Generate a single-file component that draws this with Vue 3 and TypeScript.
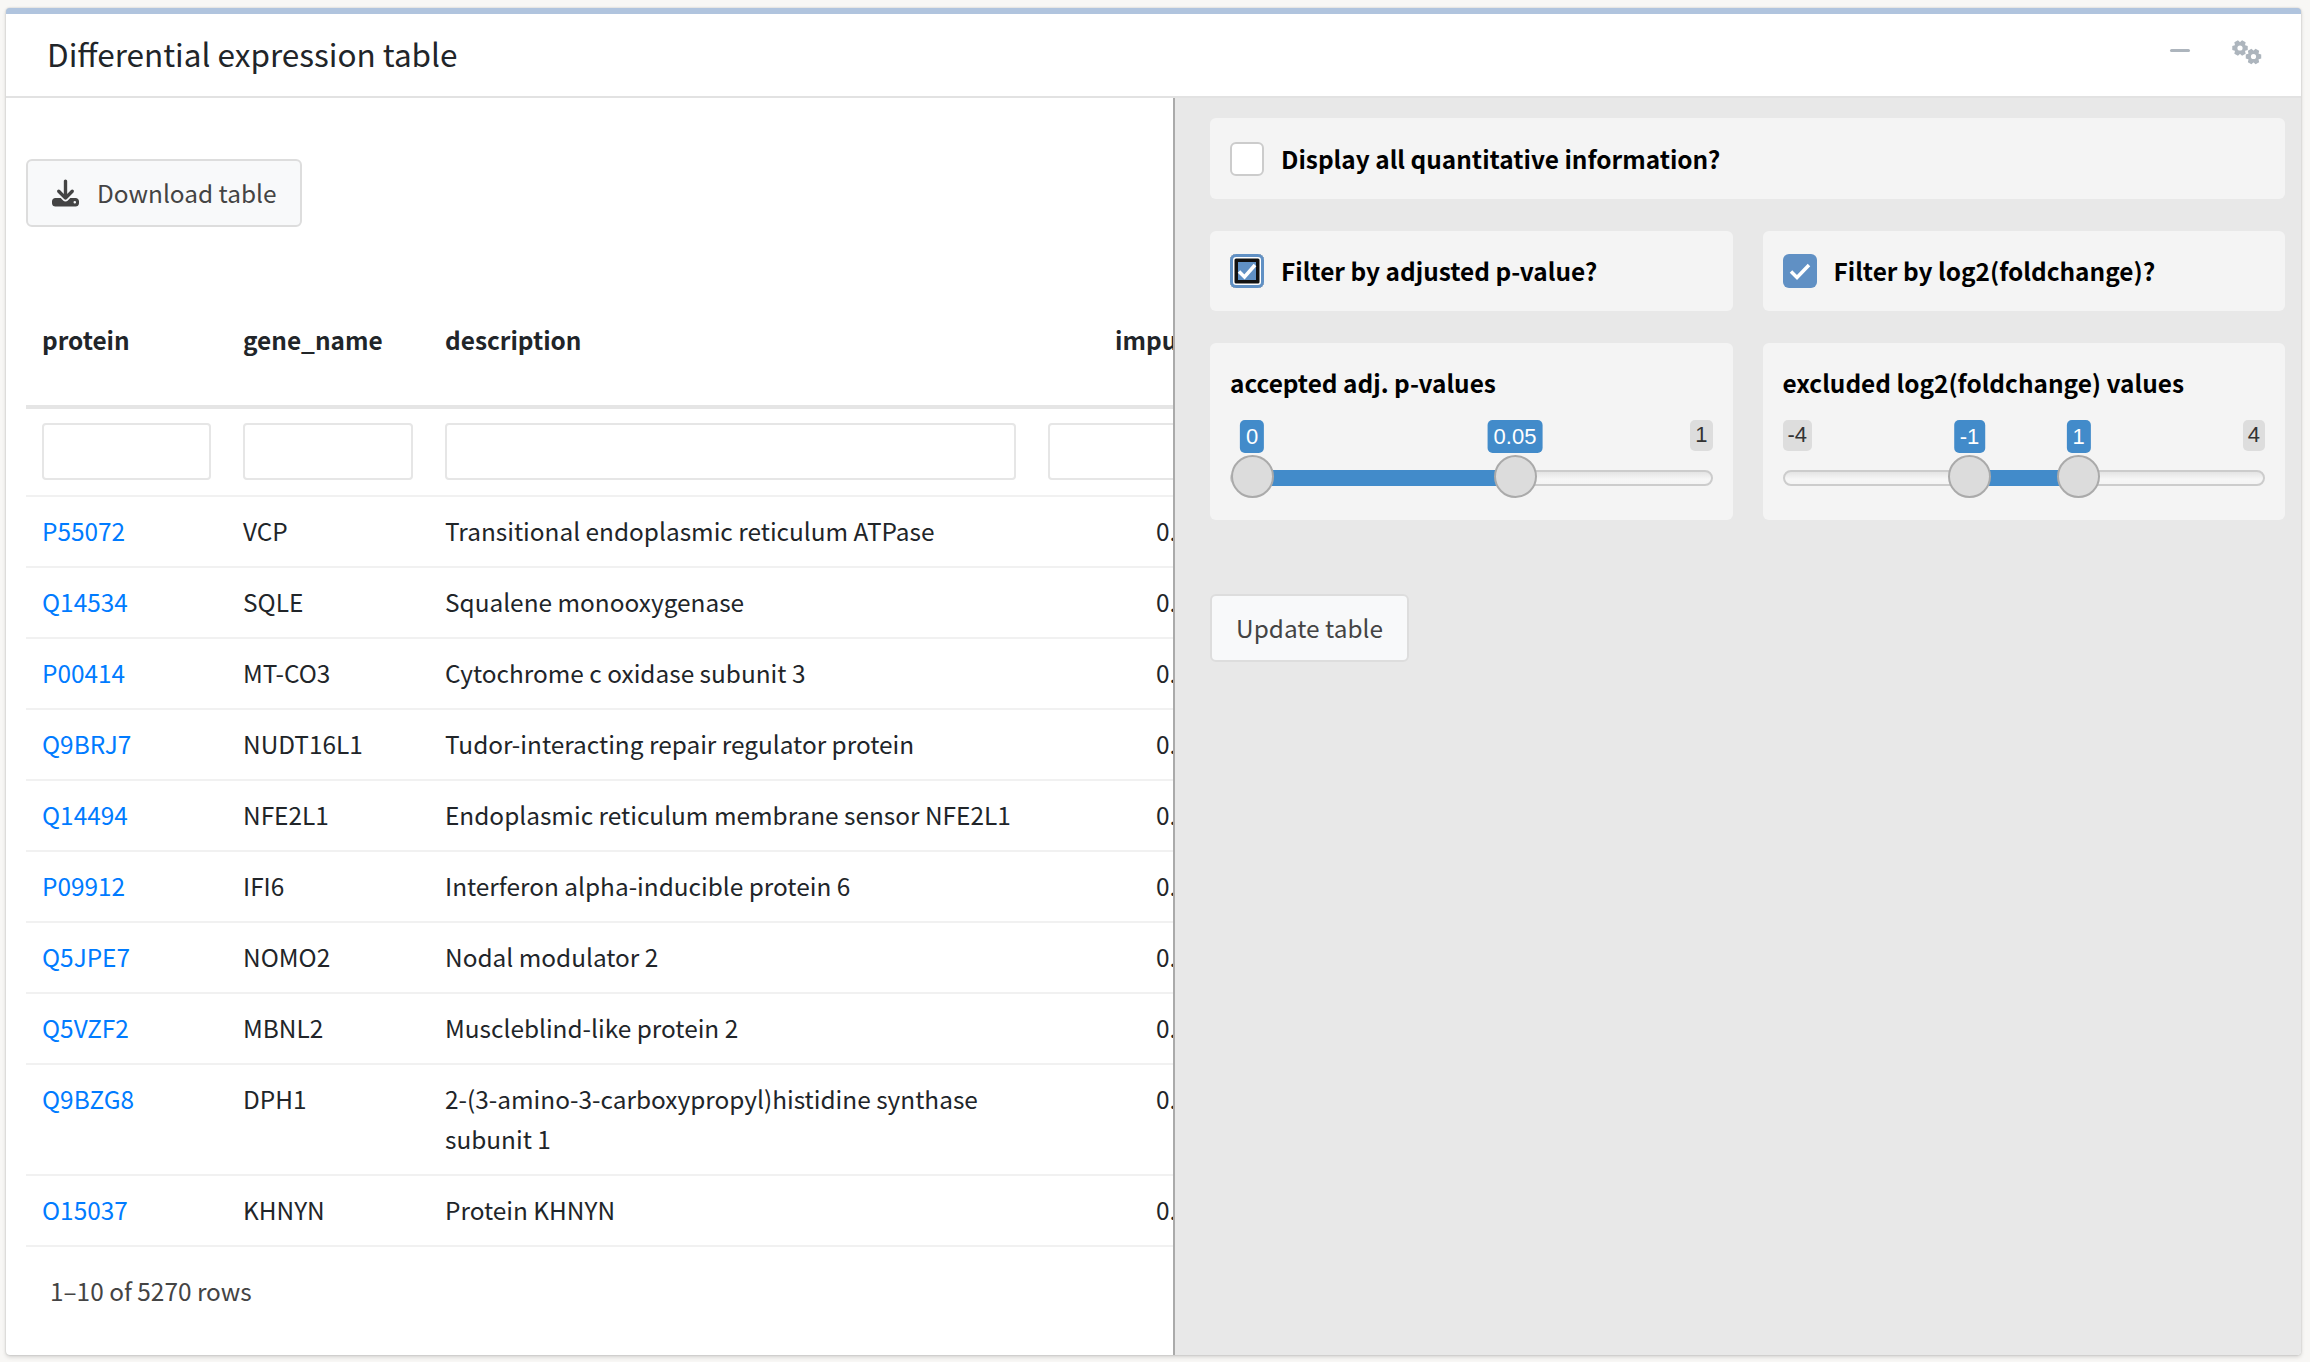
<script setup lang="ts">
interface Row { id: string; gene: string; desc: string }
const rows: Row[] = [
  { id: 'P55072', gene: 'VCP', desc: 'Transitional endoplasmic reticulum ATPase' },
  { id: 'Q14534', gene: 'SQLE', desc: 'Squalene monooxygenase' },
  { id: 'P00414', gene: 'MT-CO3', desc: 'Cytochrome c oxidase subunit 3' },
  { id: 'Q9BRJ7', gene: 'NUDT16L1', desc: 'Tudor-interacting repair regulator protein' },
  { id: 'Q14494', gene: 'NFE2L1', desc: 'Endoplasmic reticulum membrane sensor NFE2L1' },
  { id: 'P09912', gene: 'IFI6', desc: 'Interferon alpha-inducible protein 6' },
  { id: 'Q5JPE7', gene: 'NOMO2', desc: 'Nodal modulator 2' },
  { id: 'Q5VZF2', gene: 'MBNL2', desc: 'Muscleblind-like protein 2' },
  { id: 'Q9BZG8', gene: 'DPH1', desc: '2-(3-amino-3-carboxypropyl)histidine synthase subunit 1' },
  { id: 'O15037', gene: 'KHNYN', desc: 'Protein KHNYN' },
]

interface Slider {
  label: string
  min: string
  max: string
  from: string
  to: string
  fromPx: number
  toPx: number
}
const sliders: Slider[] = [
  { label: 'accepted adj. p-values', min: '', max: '1', from: '0', to: '0.05', fromPx: 22, toPx: 285 },
  { label: 'excluded log2(foldchange) values', min: '-4', max: '4', from: '-1', to: '1', fromPx: 187, toPx: 296 },
]

function gear(cx: number, cy: number, r: number, hole: number): string {
  const pts: string[] = []
  const teeth = 6
  const inner = r * 0.74
  for (let i = 0; i < teeth; i++) {
    const a = (i / teeth) * Math.PI * 2
    const step = Math.PI / teeth
    const seq: [number, number][] = [
      [a - step * 0.95, inner],
      [a - step * 0.5, r],
      [a + step * 0.5, r],
      [a + step * 0.95, inner],
    ]
    for (const [t, rad] of seq) {
      pts.push(`${(cx + rad * Math.cos(t)).toFixed(2)} ${(cy + rad * Math.sin(t)).toFixed(2)}`)
    }
  }
  const ring = `M${cx - hole} ${cy}a${hole} ${hole} 0 1 0 ${hole * 2} 0a${hole} ${hole} 0 1 0 ${-hole * 2} 0z`
  return `M${pts.join('L')}z${ring}`
}
const gearsPath = gear(9, 9, 8, 2.6) + gear(22.5, 17.5, 8, 2.6)
</script>

<template>
  <div class="page">
    <section class="card">
      <header class="card-head">
        <h3 class="title">Differential expression table</h3>
        <div class="tools">
          <span class="minus"></span>
          <svg class="gears" viewBox="0 0 31 26" width="31" height="26" aria-hidden="true">
            <path :d="gearsPath" fill="#adb5bd" fill-rule="evenodd" />
          </svg>
        </div>
      </header>
      <div class="card-body">
        <div class="left">
          <button class="btn btn-dl" type="button">
            <svg viewBox="0 0 512 512" width="27" height="28" aria-hidden="true">
              <path fill="#444" d="M288 32c0-17.700-14.300-32-32-32s-32 14.300-32 32V274.700l-73.400-73.400c-12.500-12.500-32.800-12.500-45.300 0s-12.500 32.800 0 45.300l128 128c12.500 12.500 32.800 12.500 45.300 0l128-128c12.500-12.500 12.500-32.800 0-45.300s-32.800-12.500-45.300 0L288 274.700V32zM64 352c-35.300 0-64 28.700-64 64v32c0 35.300 28.700 64 64 64H448c35.300 0 64-28.700 64-64V416c0-35.300-28.700-64-64-64H346.500l-45.300 45.300c-25 25-65.500 25-90.500 0L165.500 352H64zm368 56a24 24 0 1 1 0 48 24 24 0 1 1 0-48z" />
            </svg>
            <span class="btn-text">Download table</span>
          </button>
          <div class="table-wrap">
            <table class="dt">
              <colgroup>
                <col class="c1" /><col class="c2" /><col class="c3" /><col class="c4" />
              </colgroup>
              <thead>
                <tr class="heads">
                  <th>protein</th><th>gene_name</th><th>description</th><th class="imp">impu</th>
                </tr>
                <tr class="filters">
                  <td><div class="inp"></div></td>
                  <td><div class="inp"></div></td>
                  <td><div class="inp"></div></td>
                  <td><div class="inp"></div></td>
                </tr>
              </thead>
              <tbody>
                <tr v-for="r in rows" :key="r.id">
                  <td><a class="link" href="#">{{ r.id }}</a></td>
                  <td>{{ r.gene }}</td>
                  <td>{{ r.desc }}</td>
                  <td class="num">0.</td>
                </tr>
              </tbody>
            </table>
          </div>
          <div class="foot">1–10 of 5270 rows</div>
        </div>
        <div class="split"></div>
        <div class="right">
          <div class="panel check-panel wide">
            <span class="box"></span>
            <span class="lbl">Display all quantitative information?</span>
          </div>
          <div class="panel check-panel">
            <span class="box on focus">
              <svg viewBox="0 0 34 34" width="34" height="34" aria-hidden="true"><polyline points="9,17.500 14.500,23 25,11" fill="none" stroke="#fff" stroke-width="3.500" /></svg>
            </span>
            <span class="lbl">Filter by adjusted p-value?</span>
          </div>
          <div class="panel check-panel">
            <span class="box on">
              <svg viewBox="0 0 34 34" width="34" height="34" aria-hidden="true"><polyline points="8,17.500 14,23.500 26,11" fill="none" stroke="#fff" stroke-width="3.500" /></svg>
            </span>
            <span class="lbl">Filter by log2(foldchange)?</span>
          </div>
          <div v-for="s in sliders" :key="s.label" class="panel slider-panel">
            <div class="lbl">{{ s.label }}</div>
            <div class="slider">
              <span v-if="s.min" class="tag grey tag-min">{{ s.min }}</span>
              <span class="tag grey tag-max">{{ s.max }}</span>
              <span class="track"></span>
              <span class="fill" :style="{ left: s.fromPx + 'px', width: s.toPx - s.fromPx + 'px' }"></span>
              <span class="tag blue" :style="{ left: s.fromPx + 'px' }">{{ s.from }}</span>
              <span class="tag blue" :style="{ left: s.toPx + 'px' }">{{ s.to }}</span>
              <span class="handle" :style="{ left: s.fromPx + 'px' }"></span>
              <span class="handle" :style="{ left: s.toPx + 'px' }"></span>
            </div>
          </div>
          <div class="wide btn-row">
            <button class="btn btn-up" type="button">Update table</button>
          </div>
        </div>
      </div>
    </section>
  </div>
</template>

<style>
body { margin: 0; background: #f8f7f5; }
</style>

<style scoped>
.page {
  box-sizing: border-box;
  width: 2310px;
  height: 1362px;
  padding: 8px 9px 7px 6px;
  font-family: "Noto Sans CJK SC", "Source Sans Pro", "Noto Sans", sans-serif;
  font-size: 24.4px;
  line-height: 40px;
  color: #212529;
}
.card {
  box-sizing: border-box;
  height: 100%;
  display: flex;
  flex-direction: column;
  background: #fff;
  border-top: 6px solid #b0c4de;
  border-radius: 4px;
  box-shadow: 0 0 2px rgba(0, 0, 0, .2), 0 2px 4px rgba(0, 0, 0, .15);
  overflow: hidden;
}
.card-head {
  box-sizing: border-box;
  height: 84px;
  flex: none;
  display: flex;
  align-items: center;
  justify-content: space-between;
  padding: 0 39px 2px 41px;
  border-bottom: 2px solid #e2e2e2;
}
.title { margin: 0 0 2px; font-weight: 400; font-size: 31.500px; line-height: 44px; }
.tools { display: flex; align-items: center; gap: 41px; margin-top: -5px; }
.minus { width: 20px; height: 3px; background: #adb5bd; border-radius: 2px; margin-top: -3px; }
.gears { display: block; }
.card-body { flex: 1; display: flex; min-height: 0; }
.left { width: 1167px; flex: none; padding: 61px 0 0 20px; box-sizing: border-box; overflow: hidden; }
.split { width: 2px; flex: none; background: #aaa; }
.right {
  flex: 1;
  min-width: 0;
  background: #e8e8e8;
  box-sizing: border-box;
  padding: 20px 16px 0 35px;
  display: grid;
  grid-template-columns: 1fr 1fr;
  grid-template-rows: 81px 80px 177px auto;
  column-gap: 30px;
  row-gap: 32px;
  align-content: start;
}
.wide { grid-column: 1 / -1; }
.btn {
  box-sizing: border-box;
  font: inherit;
  color: #444;
  background: #f8f9fa;
  border: 2px solid #ddd;
  border-radius: 6px;
  padding: 0;
  display: inline-flex;
  align-items: center;
}
.btn-dl { width: 276px; height: 68px; padding-left: 24px; gap: 18px; }
.btn-text { margin-top: -1px; }
.btn-up { width: 199px; height: 68px; justify-content: center; padding-bottom: 1px; }
.btn-row { padding-top: 42px; }
.table-wrap { margin-top: 60px; }
.dt { border-collapse: separate; border-spacing: 0; table-layout: fixed; width: 1306px; }
.c1 { width: 201px; } .c2 { width: 202px; } .c3 { width: 603px; } .c4 { width: 300px; }
th, td { padding: 13.500px 16px 15.500px 16px; text-align: left; vertical-align: top; box-sizing: border-box; }
tbody td { border-bottom: 2px solid #f1f1f1; }
.heads th { padding-top: 32.500px; padding-bottom: 45.500px; border-bottom: 4px solid #e5e5e5; font-weight: 700; }
.heads .imp { padding-left: 83px; white-space: nowrap; }
.filters td { padding-top: 14px; padding-bottom: 15px; border-bottom: 2px solid #f1f1f1; }
.inp { box-sizing: border-box; height: 57px; width: 100%; border: 2px solid #e6e6e6; border-radius: 4px; background: #fff; }
.link { color: #007bff; text-decoration: none; }
.num { padding-left: 124px; }
.foot { margin: 24px 0 0 24px; color: #444; }
.panel { background: #f4f4f4; border-radius: 6px; box-sizing: border-box; }
.check-panel { display: flex; align-items: center; padding-left: 20px; gap: 17px; }
.lbl { font-weight: 700; color: #000; }
.box {
  box-sizing: border-box;
  width: 34px;
  height: 34px;
  flex: none;
  background: #fff;
  border: 2px solid #ccc;
  border-radius: 6px;
  display: block;
  position: relative;
}
.box.on { background: #6090c4; border: 0; }
.box.focus { box-shadow: inset 0 0 0 3px #6090c4, inset 0 0 0 4.500px #fff, inset 0 0 0 8px #111; }
.box svg { display: block; }
.slider-panel { padding: 20px 20px 0 20px; }
.slider { position: relative; height: 77px; margin-top: 17px; font-family: "Liberation Sans", Arial, sans-serif; font-size: 22px; }
.track {
  position: absolute; left: 0; right: 0; top: 50px; height: 16px;
  box-sizing: border-box;
  background: linear-gradient(#e4e4e4, #f6f6f6 60%, #f4f4f4);
  border: 2px solid #ccc; border-radius: 8px;
}
.fill { position: absolute; top: 50px; height: 16px; background: #428bca; }
.handle {
  position: absolute; top: 34.500px; width: 43px; height: 43px; margin-left: -21.500px;
  box-sizing: border-box; background: #dcdcdc; border: 2px solid #aaa; border-radius: 50%;
}
.tag { position: absolute; top: 0; box-sizing: border-box; padding: 0 6px; border-radius: 5px; line-height: 33px; height: 33px; white-space: nowrap; }
.tag.blue { background: #428bca; color: #fff; transform: translateX(-50%); }
.tag.grey { background: #ddd; color: #333; height: 31px; line-height: 30px; padding: 0 5px; }
.tag-min { left: 0; }
.tag-max { right: 0; }
</style>
